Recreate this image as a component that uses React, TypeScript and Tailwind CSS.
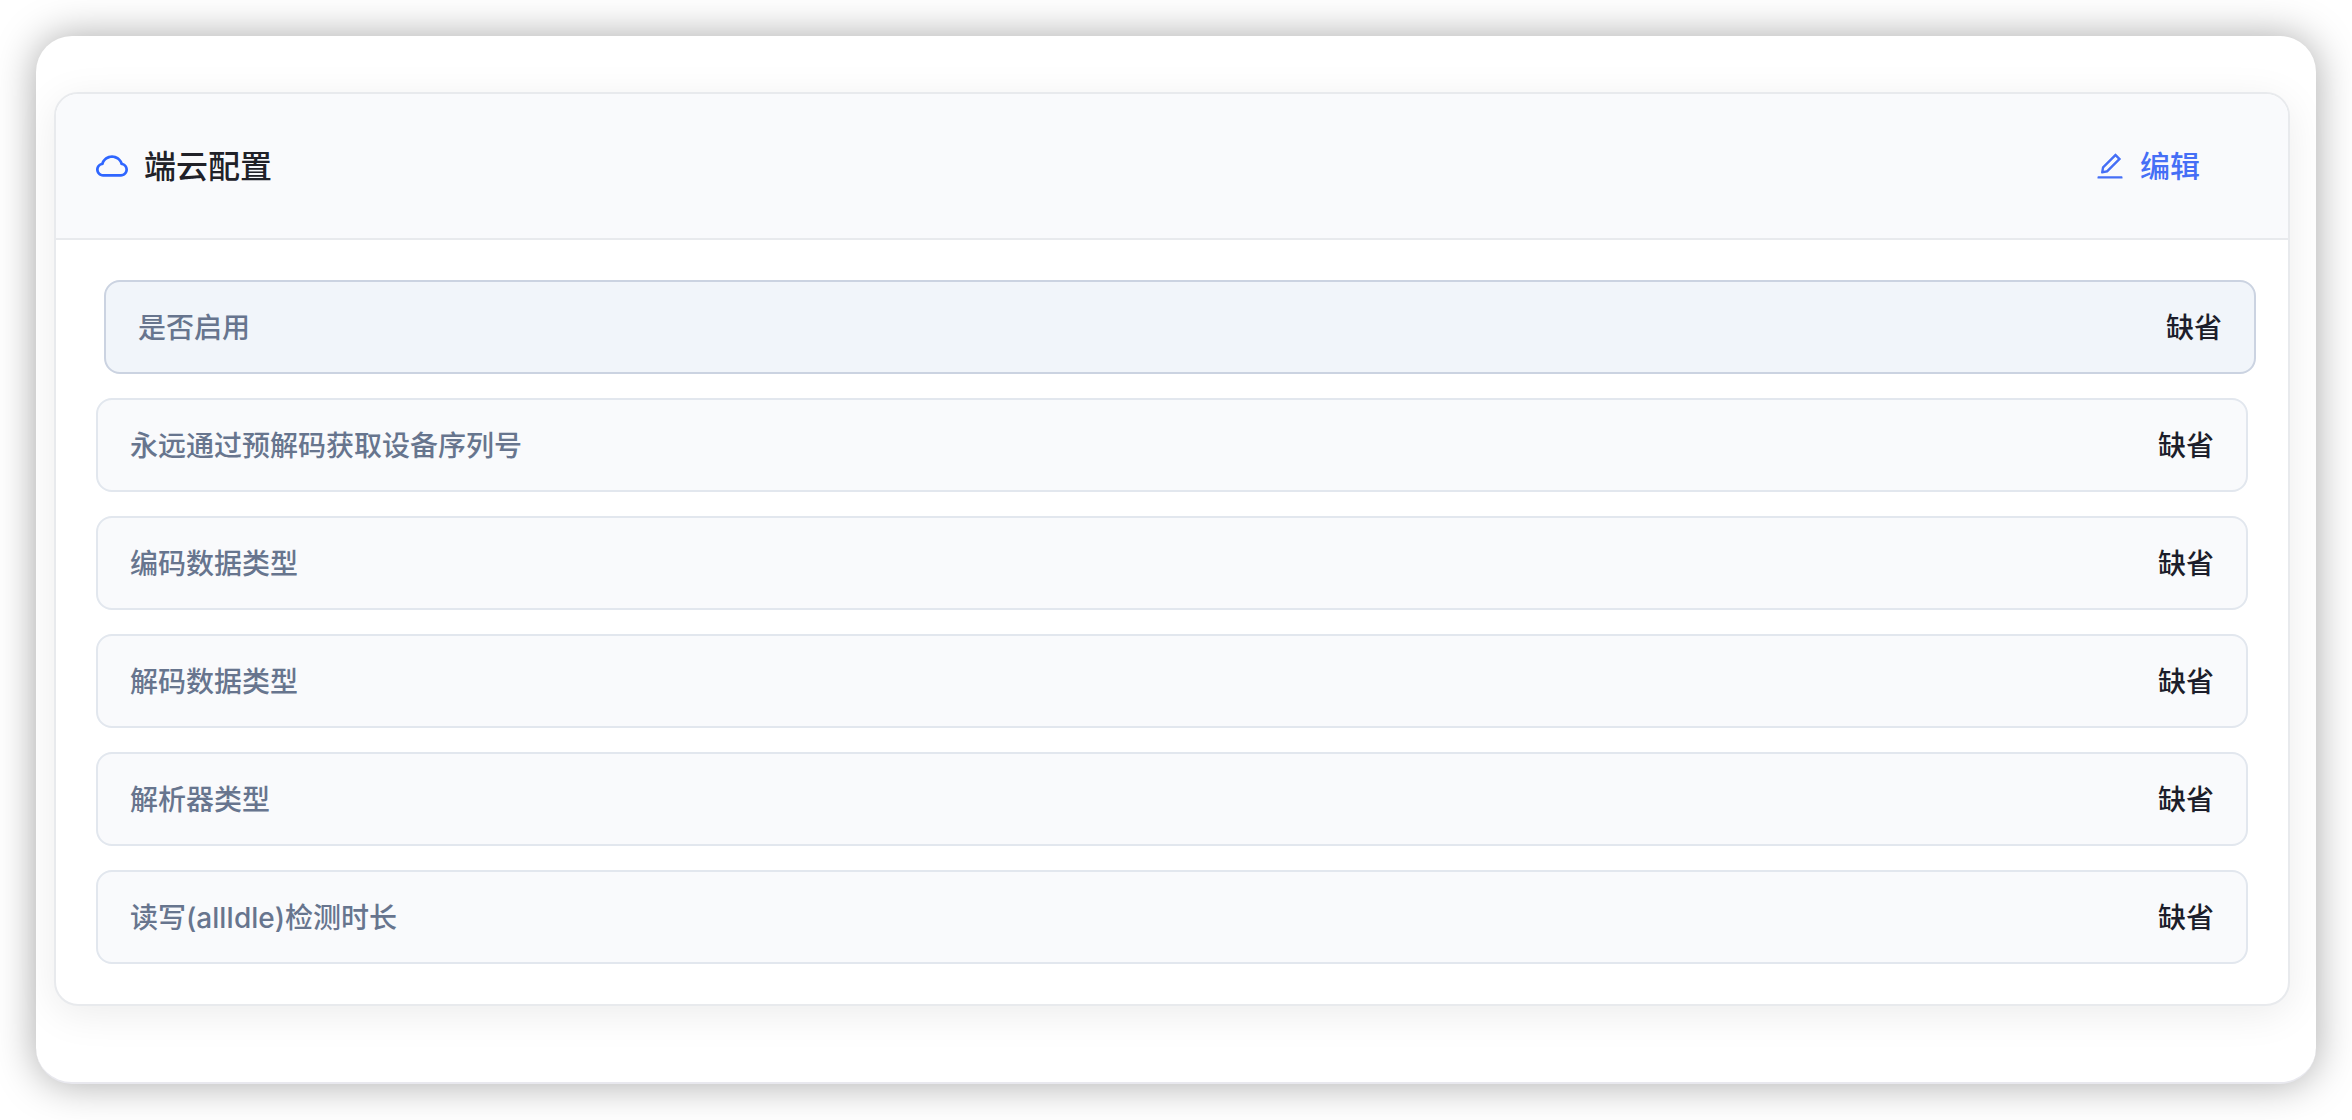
import clsx from "clsx";

interface ConfigItem {
  label: string;
  value: string;
  active?: boolean;
}

const items: ConfigItem[] = [
  { label: "是否启用", value: "缺省", active: true },
  { label: "永远通过预解码获取设备序列号", value: "缺省" },
  { label: "编码数据类型", value: "缺省" },
  { label: "解码数据类型", value: "缺省" },
  { label: "解析器类型", value: "缺省" },
  { label: "读写(allIdle)检测时长", value: "缺省" },
];

function CloudIcon() {
  return (
    <svg viewBox="64 64 896 896" className="size-8 shrink-0" fill="currentColor" aria-hidden="true">
      <path d="M811.4 418.7C765.6 297.9 648.9 212 512.2 212S258.8 297.8 213 418.6C127.3 441.1 64 519.1 64 612c0 110.5 89.5 200 199.9 200h496.2C870.5 812 960 722.5 960 612c0-92.7-63.1-170.7-148.6-193.3zm36.3 281a123.07 123.07 0 01-87.6 36.3H263.9c-33.1 0-64.2-12.9-87.6-36.3A123.3 123.3 0 01140 612c0-28 9.1-54.3 26.2-76.3a125.7 125.7 0 0166.1-43.7l37.9-9.9 13.9-36.6c8.6-22.8 20.6-44.1 35.7-63.4a245.6 245.6 0 0152.4-49.9c41.1-28.9 89.5-44.2 140-44.2s98.9 15.3 140 44.2c19.9 14 37.5 30.8 52.4 49.9 15.1 19.3 27.1 40.7 35.7 63.4l13.8 36.5 37.8 10c54.3 14.5 92.1 63.8 92.1 120 0 33.1-12.9 64.3-36.3 87.7z" />
    </svg>
  );
}

function EditIcon() {
  return (
    <svg viewBox="64 64 896 896" className="size-7 shrink-0" fill="currentColor" aria-hidden="true">
      <path d="M257.7 752c2 0 4-.2 6-.5L431.9 722c2-.4 3.9-1.3 5.3-2.8l423.9-423.9a9.96 9.96 0 000-14.1L694.9 114.9c-1.9-1.9-4.4-2.9-7.1-2.9s-5.2 1-7.1 2.9L256.8 538.8c-1.5 1.5-2.4 3.3-2.8 5.3l-29.5 168.2a33.5 33.5 0 009.4 29.8c6.6 6.4 14.9 9.9 23.8 9.9zm67.4-174.4L687.8 215l73.3 73.3-362.7 362.6-88.9 15.7 15.6-89zM880 836H144c-17.7 0-32 14.3-32 32v36c0 4.4 3.6 8 8 8h784c4.4 0 8-3.6 8-8v-36c0-17.7-14.3-32-32-32z" />
    </svg>
  );
}

function ConfigRow({ label, value, active }: ConfigItem) {
  return (
    <div
      className={clsx(
        "flex items-center justify-between rounded-2xl border-2 px-8 pt-[25px] pb-[23px] text-[28px] leading-[42px] font-medium",
        active ? "translate-x-2 border-[#cbd3e1] bg-[#f1f5fa]" : "border-[#e2e7ee] bg-[#f9fafc]"
      )}
    >
      <dt className="text-[#67758e]">{label}</dt>
      <dd className="text-[#1c1e2b]">{value}</dd>
    </div>
  );
}

export default function App() {
  return (
    <div className="min-h-screen bg-white p-9 font-['Inter','Noto_Sans_CJK_SC',sans-serif]">
      <main className="rounded-[36px] border-b-2 border-[#e8e8ee] bg-white pt-14 pr-[26px] pb-[76px] pl-[18px] shadow-[0_0_40px_rgba(0,0,0,0.34)]">
        <section className="overflow-hidden rounded-3xl border-2 border-[#e8eaed] bg-white shadow-[0_8px_40px_rgba(0,0,0,0.08)]">
          <header className="flex items-center justify-between border-b-2 border-[#e8eaed] bg-[#f9fafc] px-10 py-8">
            <h2 className="flex items-center gap-4 text-[32px] leading-[48px] font-medium text-[#202128]">
              <span className="text-[#2f66ff]">
                <CloudIcon />
              </span>
              <span className="pt-0.5">端云配置</span>
            </h2>
            <button type="button" className="flex h-20 items-center gap-4 px-12 text-[30px] font-medium text-[#456ff6]">
              <EditIcon />
              编辑
            </button>
          </header>
          <dl className="flex flex-col gap-6 p-10">
            {items.map((item) => (
              <ConfigRow key={item.label} {...item} />
            ))}
          </dl>
        </section>
      </main>
    </div>
  );
}
